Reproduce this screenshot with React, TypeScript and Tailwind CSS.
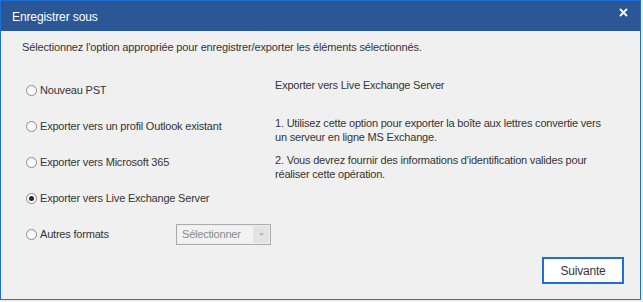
import { useState } from "react";

const options = [
  "Nouveau PST",
  "Exporter vers un profil Outlook existant",
  "Exporter vers Microsoft 365",
  "Exporter vers Live Exchange Server",
];

function Radio({ checked }: { checked: boolean }) {
  return (
    <span className="w-[11px] h-[11px] rounded-full border border-[#8a8a8a] bg-[#fafafa] flex items-center justify-center shrink-0">
      {checked && <span className="w-[5px] h-[5px] rounded-full bg-[#2a2a2a]" />}
    </span>
  );
}

function App() {
  const [selected, setSelected] = useState(3);

  return (
    <div className="w-[643px] h-[302px] bg-[#f0f0f0] font-['Liberation_Sans',Arial,sans-serif]">
      <div className="w-[641px] h-[300px] border border-[#1d6fd6] flex flex-col bg-[#f0f0f0] text-[#353535]">
        <div className="h-[30px] bg-[#2b5797] flex justify-between items-start shrink-0">
          <div className="pl-[11px] pt-[9px] text-white text-[12px] leading-[14px] tracking-[-0.1px]">Enregistrer sous</div>
          <div className="pr-[12px] pt-[7px] text-white">
            <svg width="9" height="9" viewBox="0 0 9 9">
              <path d="M1 1L8 8M8 1L1 8" stroke="white" strokeWidth="1.8" />
            </svg>
          </div>
        </div>

        <div className="flex-1 flex flex-col">
          <div className="pl-[21px] pt-[9px] text-[11px] leading-[14px] tracking-[-0.15px]">
            Sélectionnez l'option appropriée pour enregistrer/exporter les éléments sélectionnés.
          </div>

          <div className="flex mt-[18px]">
            <div className="w-[274px] pl-[25px] flex flex-col shrink-0">
              {options.map((label, i) => (
                <div key={label} className="h-[36px] flex items-center gap-[3px] cursor-default" onClick={() => setSelected(i)}>
                  <Radio checked={selected === i} />
                  <span className="text-[11px] leading-[14px] tracking-[-0.2px]">{label}</span>
                </div>
              ))}
              <div className="h-[36px] flex items-center" onClick={() => setSelected(4)}>
                <div className="w-[150px] flex items-center gap-[3px] shrink-0">
                  <Radio checked={selected === 4} />
                  <span className="text-[11px] leading-[14px] tracking-[-0.2px]">Autres formats</span>
                </div>
                <div className="w-[95px] h-[21px] border border-[#acacac] bg-[#ededed] flex items-stretch p-[1px] shrink-0">
                  <div className="flex-1 bg-[#f2f2f2] pl-[4px] flex items-center text-[11px] tracking-[-0.2px] text-[#8a8a8a]">Sélectionner</div>
                  <div className="w-[16px] bg-[#e3e3e3] flex items-center justify-center">
                    <svg width="5" height="3" viewBox="0 0 5 3">
                      <path d="M0 0H5L2.5 3Z" fill="#b4b4b4" />
                    </svg>
                  </div>
                </div>
              </div>
            </div>

            <div className="pt-[6px] flex flex-col text-[11px] leading-[14px] tracking-[-0.2px]">
              <div>Exporter vers Live Exchange Server</div>
              <div className="mt-[24px]">
                1. Utilisez cette option pour exporter la boîte aux lettres convertie vers<br />
                un serveur en ligne MS Exchange.
              </div>
              <div className="mt-[9px]">
                2. Vous devrez fournir des informations d'identification valides pour<br />
                réaliser cette opération.
              </div>
            </div>
          </div>

          <div className="mt-auto flex justify-end pr-[16px] pb-[15px]">
            <button className="w-[82px] h-[27px] border-2 border-[#1d6fd6] bg-white text-[12px] tracking-[-0.2px] text-[#353535]">
              Suivante
            </button>
          </div>
        </div>
      </div>
    </div>
  );
}

export default App;
